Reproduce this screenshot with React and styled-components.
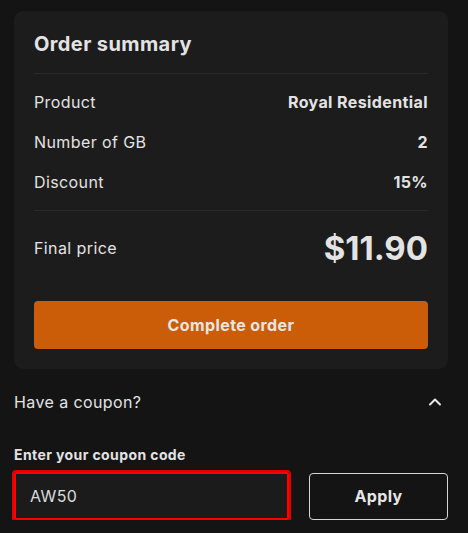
import React from "react";
import styled, { createGlobalStyle } from "styled-components";

const GlobalStyle = createGlobalStyle`
  html, body {
    margin: 0;
    padding: 0;
    background: #141414;
  }
  body {
    font-family: Inter, "Noto Sans", sans-serif;
    color: #e3e3e3;
    letter-spacing: 0.4px;
  }
`;

const Page = styled.div`
  width: 434px;
  padding: 11px 20px 0 14px;
  display: flex;
  flex-direction: column;
`;

const Card = styled.div`
  background: #1c1c1c;
  border-radius: 9px;
  padding: 20px;
  display: flex;
  flex-direction: column;
`;

const Title = styled.h2`
  margin: 0;
  font-size: 20px;
  font-weight: 700;
  line-height: 26px;
  padding-bottom: 16px;
  border-bottom: 1px solid #2a2a2a;
`;

const Rows = styled.div`
  display: flex;
  flex-direction: column;
  gap: 18px;
  padding: 17px 0;
  border-bottom: 1px solid #2a2a2a;
`;

const Row = styled.div`
  display: flex;
  justify-content: space-between;
  align-items: center;
  font-size: 16px;
  line-height: 22px;
`;

const Value = styled.span`
  font-weight: 700;
`;

const PriceRow = styled(Row)`
  padding: 17px 0 33px;
`;

const Price = styled.span`
  font-size: 33px;
  font-weight: 700;
  line-height: 40px;
  letter-spacing: 0;
`;

const OrderButton = styled.button`
  height: 48px;
  border: none;
  border-radius: 4px;
  background: #cc5d08;
  color: #e6e6e6;
  font-family: inherit;
  font-size: 16px;
  font-weight: 700;
  letter-spacing: 0.4px;
  cursor: pointer;
`;

const CouponHeader = styled.div`
  display: flex;
  justify-content: space-between;
  align-items: center;
  height: 66px;
  font-size: 16px;
`;

const Chevron = styled.svg`
  width: 14px;
  height: 14px;
  margin-right: 6px;
`;

const Label = styled.label`
  display: block;
  margin-top: 11px;
  font-size: 14px;
  font-weight: 700;
  line-height: 18px;
`;

const Form = styled.div`
  display: flex;
  gap: 20px;
  margin-top: 8px;
  align-items: center;
`;

const Input = styled.input`
  width: 275px;
  height: 48px;
  box-sizing: border-box;
  background: #1b1b1b;
  border: 2px solid #ff0000;
  outline: 2px solid #e00000;
  border-radius: 2px;
  color: #dcdcdc;
  font-family: inherit;
  font-size: 16px;
  letter-spacing: 0.4px;
  padding: 0 14px;
`;

const ApplyButton = styled.button`
  width: 139px;
  height: 47px;
  background: transparent;
  border: 1px solid #d6d6d6;
  border-radius: 4px;
  color: #e6e6e6;
  font-family: inherit;
  font-size: 16px;
  font-weight: 700;
  letter-spacing: 0.4px;
  cursor: pointer;
`;

export default function App() {
  return (
    <>
      <GlobalStyle />
      <Page>
        <Card>
          <Title>Order summary</Title>
          <Rows>
            <Row>
              <span>Product</span>
              <Value>Royal Residential</Value>
            </Row>
            <Row>
              <span>Number of GB</span>
              <Value>2</Value>
            </Row>
            <Row>
              <span>Discount</span>
              <Value>15%</Value>
            </Row>
          </Rows>
          <PriceRow>
            <span>Final price</span>
            <Price>$11.90</Price>
          </PriceRow>
          <OrderButton>Complete order</OrderButton>
        </Card>
        <CouponHeader>
          <span>Have a coupon?</span>
          <Chevron viewBox="0 0 14 14" fill="none" stroke="#e6e6e6" strokeWidth="2" strokeLinecap="round" strokeLinejoin="round">
            <path d="M2 9.5 L7 4.5 L12 9.5" />
          </Chevron>
        </CouponHeader>
        <Label>Enter your coupon code</Label>
        <Form>
          <Input defaultValue="AW50" />
          <ApplyButton>Apply</ApplyButton>
        </Form>
      </Page>
    </>
  );
}
